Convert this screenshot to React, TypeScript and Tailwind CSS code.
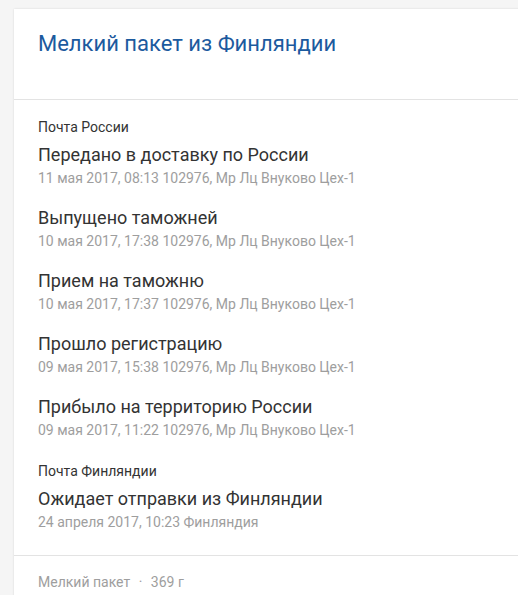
import React from "react";

type Event = { title: string; meta: string };
type Group = { carrier: string; events: Event[] };

const groups: Group[] = [
  {
    carrier: "Почта России",
    events: [
      { title: "Передано в доставку по России", meta: "11 мая 2017, 08:13 102976, Мр Лц Внуково Цех-1" },
      { title: "Выпущено таможней", meta: "10 мая 2017, 17:38 102976, Мр Лц Внуково Цех-1" },
      { title: "Прием на таможню", meta: "10 мая 2017, 17:37 102976, Мр Лц Внуково Цех-1" },
      { title: "Прошло регистрацию", meta: "09 мая 2017, 15:38 102976, Мр Лц Внуково Цех-1" },
      { title: "Прибыло на территорию России", meta: "09 мая 2017, 11:22 102976, Мр Лц Внуково Цех-1" },
    ],
  },
  {
    carrier: "Почта Финляндии",
    events: [{ title: "Ожидает отправки из Финляндии", meta: "24 апреля 2017, 10:23 Финляндия" }],
  },
];

export default function App() {
  return (
    <div className="min-h-[595px] bg-[#f5f5f5] pl-[14px] pt-[9px] font-['Roboto',sans-serif] overflow-hidden">
      <div className="bg-white shadow-[0_0_2px_rgba(0,0,0,0.12)] -mr-4">
        <div className="h-[91px] px-6 pt-[21px] border-b border-[#e3e3e3]">
          <h1 className="text-[22px] leading-[28px] text-[#1c5a9e]">Мелкий пакет из Финляндии</h1>
        </div>

        <div className="px-6 pt-[18px] pb-[23px] border-b border-[#e3e3e3] flex flex-col gap-[22px]">
          {groups.map((g) => (
            <div key={g.carrier}>
              <div className="text-[14px] leading-[18px] text-[#333]">{g.carrier}</div>
              <div className="mt-[7px] flex flex-col gap-[18px]">
                {g.events.map((e) => (
                  <div key={e.title + e.meta}>
                    <div className="text-[18px] leading-6 text-[#333]">{e.title}</div>
                    <div className="mt-px text-[14px] leading-5 text-[#9e9e9e]">{e.meta}</div>
                  </div>
                ))}
              </div>
            </div>
          ))}
        </div>

        <div className="px-6 pt-4 pb-4 text-[14px] leading-5 text-[#9e9e9e]">
          Мелкий пакет <span className="mx-[5px]">·</span> 369 г
        </div>
      </div>
    </div>
  );
}
